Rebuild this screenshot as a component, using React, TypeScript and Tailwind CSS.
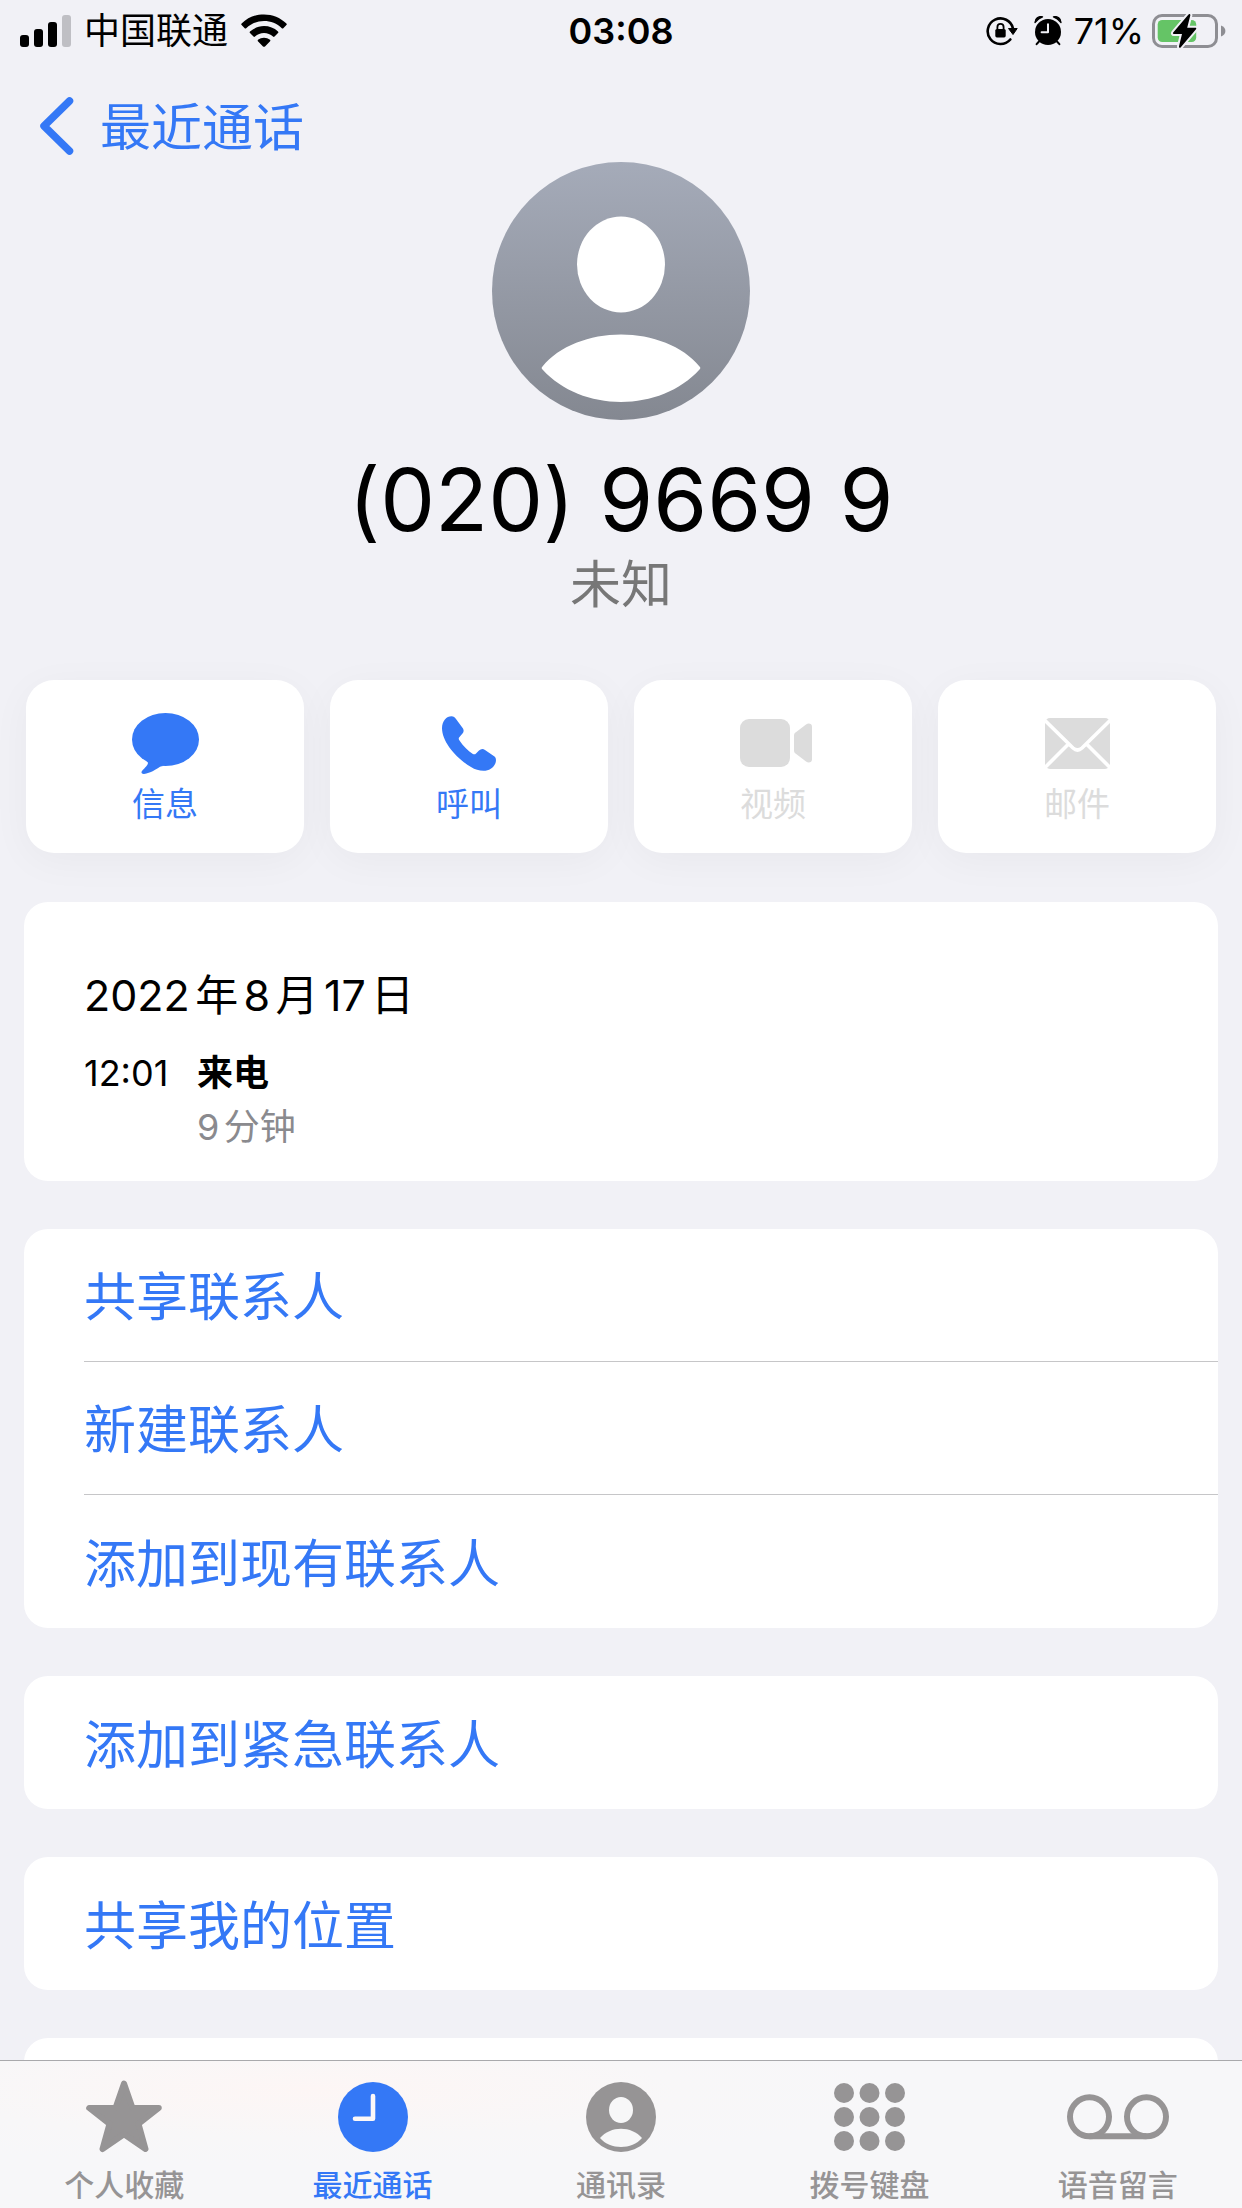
import type { ReactNode } from 'react'
import clsx from 'clsx'

function SignalIcon() {
  return (
    <svg width="51" height="32" viewBox="0 0 51 32" aria-hidden="true">
      <rect x="0" y="20" width="9" height="12" rx="3" />
      <rect x="14" y="14" width="9" height="18" rx="3" />
      <rect x="28" y="7" width="9" height="25" rx="3" />
      <rect x="42" y="0" width="9" height="32" rx="3" fill="#bfbfc4" />
    </svg>
  )
}

function WifiIcon() {
  return (
    <svg width="46" height="34" viewBox="0 0 46 34" aria-hidden="true">
      <path d="M0.6 9.6C6.6 3.4 14.5 0.4 23 0.4S39.4 3.4 45.4 9.6C45.9 10.1 45.9 10.6 45.4 11.1L42.3 14.2C41.8 14.7 41.3 14.7 40.8 14.2C36 9.5 29.7 7 23 7S10 9.5 5.2 14.2C4.7 14.7 4.2 14.7 3.7 14.2L0.6 11.1C0.1 10.6 0.1 10.1 0.6 9.6Z" />
      <path d="M9 17.6C12.8 14 17.7 12.1 23 12.1S33.2 14 37 17.6C37.5 18.1 37.5 18.6 37 19.1L33.5 22.5C33 23 32.5 23 32 22.5C29.5 20.2 26.4 19 23 19S16.5 20.2 14 22.5C13.5 23 13 23 12.5 22.5L9 19.1C8.5 18.6 8.5 18.1 9 17.6Z" />
      <path d="M17 25.8C18.7 24.5 20.8 23.7 23 23.7S27.3 24.5 29 25.8C29.5 26.2 29.5 26.8 29.1 27.2L24 32.4C23.4 33 22.6 33 22 32.4L16.9 27.2C16.5 26.8 16.5 26.2 17 25.8Z" />
    </svg>
  )
}

function RotationLockIcon() {
  return (
    <svg width="32" height="30" viewBox="0 0 32 30" aria-hidden="true">
      <path d="M27 12.5A12.8 12.8 0 1 0 24.3 23.5" fill="none" stroke="#000" strokeWidth="2.6" strokeLinecap="round" />
      <path d="M22.5 12.5H31.2L27 18.5Z" stroke="#000" strokeWidth="1" strokeLinejoin="round" />
      <rect x="9.3" y="13" width="10.4" height="8.4" rx="1.6" />
      <path d="M11.4 13.5V11a3.1 3.1 0 0 1 6.2 0v2.5" fill="none" stroke="#000" strokeWidth="1.8" />
    </svg>
  )
}

function AlarmIcon() {
  return (
    <svg width="28" height="30" viewBox="0 0 28 30" aria-hidden="true">
      <circle cx="14" cy="16" r="13" />
      <path d="M1 6.6C0.8 2.6 4.6 -0.4 8.6 0.9C6 1.7 3.2 3.9 1 6.6Z" stroke="#000" strokeWidth="1.2" strokeLinejoin="round" />
      <path d="M27 6.6C27.2 2.6 23.4 -0.4 19.4 0.9C22 1.7 24.8 3.9 27 6.6Z" stroke="#000" strokeWidth="1.2" strokeLinejoin="round" />
      <path d="M5 25.5L2.6 28.2M23 25.5L25.4 28.2" stroke="#000" strokeWidth="2" strokeLinecap="round" />
      <path d="M14 8.2V16.2H7.6" fill="none" stroke="#f1f1f6" strokeWidth="2" strokeLinecap="round" strokeLinejoin="round" />
    </svg>
  )
}

function BatteryIcon() {
  return (
    <svg width="74" height="36" viewBox="0 0 74 36" aria-hidden="true">
      <rect x="1.5" y="2.5" width="63" height="31" rx="8.5" fill="none" stroke="#8e8e93" strokeWidth="3" />
      <rect x="5.7" y="7" width="38.5" height="22" rx="4.5" fill="#65c466" />
      <path d="M69 12.5C72 13.5 73.4 15.6 73.4 18S72 22.5 69 23.5Z" fill="#8e8e93" />
      <path
        d="M36.5 1.5L21.2 19.6C20.6 20.4 21 21 21.8 21H30L27 33.2C26.8 34.6 27.8 35.3 28.8 34.2L44 16.2C44.6 15.4 44.3 14.8 43.4 14.8H35.2L38.3 2.6C38.6 1 37.5 0.4 36.5 1.5Z"
        stroke="#f1f1f6"
        strokeWidth="4"
        paintOrder="stroke"
      />
    </svg>
  )
}

function AvatarIcon() {
  return (
    <svg width="258" height="258" viewBox="0 0 258 258" role="img" aria-label="未知">
      <defs>
        <linearGradient id="avatar" x1="0" y1="0" x2="0" y2="1">
          <stop offset="0" stopColor="#a5abb9" />
          <stop offset="1" stopColor="#848891" />
        </linearGradient>
      </defs>
      <circle cx="129" cy="129" r="129" fill="url(#avatar)" />
      <ellipse cx="129" cy="102.5" rx="44" ry="48" fill="#fff" />
      <path
        d="M50.5 204.5C67 184 98 172.5 129 172.5S191 184 207.5 204.5C208.6 205.7 208.6 206.5 207.5 207.6C188 229 159 240 129 240S70 229 50.5 207.6C49.4 206.5 49.4 205.7 50.5 204.5Z"
        fill="#fff"
      />
    </svg>
  )
}

function MessageIcon() {
  return (
    <svg width="67" height="61" viewBox="0 0 67 61" fill="currentColor" aria-hidden="true">
      <ellipse cx="33.5" cy="26.5" rx="33.5" ry="26.5" />
      <path d="M14 47.5C17 49.5 16 51 14.5 53C13 55 9.8 57.5 9.5 59C9.3 60.5 10.5 61 12 60.9C18.5 60.2 24.5 56 28 53.7C29 53 30 52.9 33 52.9Z" />
    </svg>
  )
}

function PhoneIcon() {
  return (
    <svg width="54" height="55" viewBox="0 0 54 55" fill="currentColor" aria-hidden="true">
      <path d="M0 12C0 5 4.5 0.3 9.5 0.3C11.5 0.3 13 1.5 14 3L21 12.5C22 14.3 21.8 16 20.5 17.5L17.5 21C16.4 22.3 16.5 23 17.5 24.5C21 30 26 34.8 30.5 37.7C32 38.6 33 38.6 34 37.5L37 34.5C39 32.7 41 32.5 43 34L52.5 40.5C54.3 42 54.3 45 53.3 47.5C51.5 52 47 54.8 41.5 54.8C37 54.8 33 53.5 29 51C14 42 0 26 0 12Z" />
    </svg>
  )
}

function VideoIcon() {
  return (
    <svg width="78" height="48" viewBox="-6 0 78 48" fill="currentColor" aria-hidden="true">
      <rect width="50" height="48" rx="9" />
      <path d="M55.5 13.5L66 5.5C68.5 3.7 72 4.5 72 7.8V40.2C72 43.5 68.5 44.3 66 42.5L55.5 34.5C54.5 33.7 54 33 54 31.5V16.5C54 15 54.5 14.3 55.5 13.5Z" />
    </svg>
  )
}

function MailIcon() {
  return (
    <svg width="65" height="51" viewBox="0 0 65 51" aria-hidden="true">
      <rect width="65" height="51" rx="5" fill="currentColor" />
      <path d="M0 2.5L28 30Q32.5 34 37 30L65 2.5M23.5 26L0 49.5M41.5 26L65 49.5" fill="none" stroke="#fff" strokeWidth="3.6" />
    </svg>
  )
}

function StarIcon() {
  return (
    <svg width="76" height="74" viewBox="0 0 76 74" fill="currentColor" aria-hidden="true">
      <path
        d="M38 3.5L46.5 28H72.8L52.5 43.8L59.5 69L38 54.2L16.5 69L23.5 43.8L3.2 28H29.5Z"
        stroke="currentColor"
        strokeWidth="6"
        strokeLinejoin="round"
      />
    </svg>
  )
}

function ClockIcon() {
  return (
    <svg width="70" height="70" viewBox="0 0 70 70" aria-hidden="true">
      <circle cx="35" cy="35" r="35" fill="currentColor" />
      <path d="M35 14V36.7H17" fill="none" stroke="#fcf8f8" strokeWidth="4.6" strokeLinecap="round" strokeLinejoin="round" />
    </svg>
  )
}

function ContactsIcon() {
  return (
    <svg width="70" height="70" viewBox="0 0 70 70" aria-hidden="true">
      <circle cx="35" cy="35" r="35" fill="currentColor" />
      <ellipse cx="35" cy="28" rx="12" ry="13" fill="#f7f7f8" />
      <path d="M14 56C19 50 27 46.7 35 46.7S51 50 56 56C51 62 43 65 35 65S19 62 14 56Z" fill="#f7f7f8" />
    </svg>
  )
}

function KeypadIcon() {
  const columns = [10, 35.5, 61]
  const rows = [10, 34, 58]
  return (
    <svg width="71" height="68" viewBox="0 0 71 68" fill="currentColor" aria-hidden="true">
      {rows.map((cy) => columns.map((cx) => <circle key={`${cx}-${cy}`} cx={cx} cy={cy} r="10" />))}
    </svg>
  )
}

function VoicemailIcon() {
  return (
    <svg width="102" height="46" viewBox="0 0 102 46" fill="none" stroke="currentColor" strokeWidth="6" aria-hidden="true">
      <circle cx="22.5" cy="22.8" r="19.5" />
      <circle cx="79.5" cy="22.8" r="19.5" />
      <path d="M22.5 42.3H79.5" />
    </svg>
  )
}

interface Action {
  label: string
  icon: ReactNode
  enabled: boolean
}

const actions: Action[] = [
  { label: '信息', icon: <MessageIcon />, enabled: true },
  { label: '呼叫', icon: <PhoneIcon />, enabled: true },
  { label: '视频', icon: <VideoIcon />, enabled: false },
  { label: '邮件', icon: <MailIcon />, enabled: false },
]

const groups = [
  ['共享联系人', '新建联系人', '添加到现有联系人'],
  ['添加到紧急联系人'],
  ['共享我的位置'],
]

const tabs = [
  { label: '个人收藏', icon: <StarIcon /> },
  { label: '最近通话', icon: <ClockIcon />, active: true },
  { label: '通讯录', icon: <ContactsIcon /> },
  { label: '拨号键盘', icon: <KeypadIcon /> },
  { label: '语音留言', icon: <VoicemailIcon /> },
]

function StatusBar() {
  return (
    <div className="grid h-[60px] shrink-0 grid-cols-3 items-center px-4 pt-0.5 text-[36px] leading-[58px] text-black">
      <div className="flex items-center gap-[13px] pl-1">
        <SignalIcon />
        <span className="whitespace-nowrap">中国联通</span>
        <WifiIcon />
      </div>
      <span className="text-center font-semibold">03:08</span>
      <div className="flex items-center justify-end gap-4">
        <RotationLockIcon />
        <AlarmIcon />
        <div className="flex items-center gap-2">
          <span className="-ml-1">71%</span>
          <BatteryIcon />
        </div>
      </div>
    </div>
  )
}

function ActionButton({ label, icon, enabled }: Action) {
  return (
    <button
      type="button"
      disabled={!enabled}
      className={clsx(
        'flex flex-1 flex-col items-center rounded-[28px] bg-white pt-[31px] pb-7 shadow-[0_8px_40px_rgba(0,0,0,0.04)]',
        enabled ? 'text-[#3478f6]' : 'text-[#dcdcdc]',
      )}
    >
      <span className="flex h-16 items-center">{icon}</span>
      <span className="mt-2 text-[33px] leading-[42px]">{label}</span>
    </button>
  )
}

function LinkGroup({ items }: { items: string[] }) {
  return (
    <ul className="rounded-[24px] bg-white pl-[60px]">
      {items.map((item) => (
        <li key={item} className="h-[133px] border-b border-[#c6c6c8] last:border-b-0">
          <button type="button" className="h-full w-full pt-[6px] text-left text-[52px] text-[#3478f6]">
            {item}
          </button>
        </li>
      ))}
    </ul>
  )
}

export default function App() {
  return (
    <div className="flex h-screen flex-col overflow-hidden bg-[#f1f1f6] font-['Inter','Noto_Sans_CJK_SC',sans-serif]">
      <StatusBar />

      <header className="mt-[30px] flex h-[72px] shrink-0 items-center pl-10">
        <a href="#recents" className="flex items-center gap-[26px] text-[51px] leading-[66px] text-[#3478f6]">
          <svg width="34" height="58" viewBox="0 0 34 58" fill="none" aria-hidden="true">
            <path d="M29.5 4L4 29L29.5 54" stroke="currentColor" strokeWidth="7.5" strokeLinecap="round" strokeLinejoin="round" />
          </svg>
          <span className="pt-1">最近通话</span>
        </a>
      </header>

      <main className="min-h-0 flex-1 overflow-y-auto [scrollbar-width:none]">
        <section className="flex flex-col items-center">
          <AvatarIcon />
          {/* calt off keeps the parentheses at their lowercase height */}
          <h1 className="mt-8 text-[87px] leading-[96px] text-black [font-feature-settings:'calt'_0]">(020) 9669 9</h1>
          <p className="text-[51px] leading-[74px] text-[#777777]">未知</p>
        </section>

        <div className="mt-[58px] flex gap-[26px] px-[26px]">
          {actions.map((action) => (
            <ActionButton key={action.label} {...action} />
          ))}
        </div>

        <div className="mt-[49px] flex flex-col gap-12 px-6 [text-autospace:normal]">
          <section className="rounded-[24px] bg-white px-[60px] pt-[63px] pb-[27px]">
            <h2 className="text-[43px] leading-[60px] text-black">2022年8月17日</h2>
            <div className="mt-[21px] grid grid-cols-[113px_1fr] text-[36px] leading-[54px] text-black">
              <time>12:01</time>
              <span className="font-bold">来电</span>
              <span className="col-start-2 text-[#8a8a8e]">9分钟</span>
            </div>
          </section>

          {groups.map((items) => (
            <LinkGroup key={items[0]} items={items} />
          ))}

          {/* next group, cut off by the tab bar */}
          <div className="h-[133px] rounded-[24px] bg-white" />
        </div>
      </main>

      <nav className="grid shrink-0 grid-cols-5 border-t border-[#a9a9ac] bg-[#f7f7f9] bg-[radial-gradient(ellipse_at_25%_20%,#fdf6f5_0%,#f8f7f8_28%,#f7f7f9_45%)] pt-5 pb-[5px]">
        {tabs.map((tab) => (
          <a
            key={tab.label}
            href="#"
            aria-current={tab.active ? 'page' : undefined}
            className={clsx('flex flex-col items-center', tab.active ? 'text-[#3478f6]' : 'text-[#969495]')}
          >
            <span className="flex h-[72px] items-center">{tab.icon}</span>
            <span className="mt-[14px] text-[30px] leading-[36px] font-medium">{tab.label}</span>
          </a>
        ))}
      </nav>
    </div>
  )
}
